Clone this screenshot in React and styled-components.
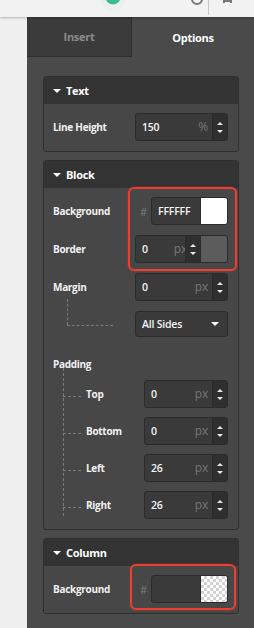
import React from 'react';
import styled, { createGlobalStyle } from 'styled-components';

const Global = createGlobalStyle`
  html, body { margin: 0; padding: 0; }
  body {
    width: 254px;
    height: 628px;
    overflow: hidden;
    background: #efefef;
    font-family: "Open Sans", "Liberation Sans", sans-serif;
  }
`;

const Page = styled.div`
  display: flex;
  flex-direction: column;
  height: 628px;
`;

const TopBar = styled.div`
  height: 17px;
  background: #f2f2f2;
  box-shadow: 0 1px 2px rgba(0, 0, 0, 0.25);
  position: relative;
  z-index: 1;
  overflow: hidden;
  display: flex;
  align-items: flex-start;
`;

const Main = styled.div`
  flex: 1;
  display: flex;
`;

const LeftStrip = styled.div`
  width: 27px;
  background: #efefef;
`;

const Panel = styled.div`
  flex: 1;
  background: #4a4a4a;
  display: flex;
  flex-direction: column;
`;

const Tabs = styled.div`
  display: flex;
  height: 40px;
`;

const Tab = styled.div`
  flex: ${p => (p.$active ? '0 0 122px' : '0 0 104px')};
  display: flex;
  align-items: center;
  justify-content: center;
  font-size: 11px;
  font-weight: 700;
  letter-spacing: -0.3px;
  color: ${p => (p.$active ? '#ffffff' : '#8a8a8a')};
  background: ${p => (p.$active ? '#4a4a4a' : '#3b3b3b')};
  border-bottom: ${p => (p.$active ? 'none' : '1px solid #2e2e2e')};
  border-right: ${p => (p.$active ? 'none' : '1px solid #2e2e2e')};
`;

const Content = styled.div`
  padding: 19px 15px 0 16px;
  display: flex;
  flex-direction: column;
  gap: 8px;
`;

const Card = styled.div`
  border: 1px solid #2f2f2f;
  border-radius: 3px;
  background: #474747;
  overflow: hidden;
`;

const CardHeader = styled.div`
  height: 27px;
  background: #333333;
  display: flex;
  align-items: center;
  padding-left: 9px;
  gap: 5px;
  font-size: 11px;
  font-weight: 700;
  letter-spacing: -0.3px;
  color: #ffffff;
`;

const Caret = styled.span`
  width: 0;
  height: 0;
  border-left: 4px solid transparent;
  border-right: 4px solid transparent;
  border-top: 4px solid #ffffff;
`;

const CardBody = styled.div`
  padding: 9px 10px 10px 9px;
  display: flex;
  flex-direction: column;
  gap: 10px;
`;

const Row = styled.div`
  display: flex;
  align-items: ${p => p.$align || 'center'};
  height: ${p => p.$h || 28}px;
  padding-left: ${p => p.$indent || 0}px;
  position: relative;
`;

const Label = styled.span`
  font-size: 10px;
  font-weight: 700;
  letter-spacing: -0.3px;
  color: #f2f2f2;
`;

const Controls = styled.div`
  margin-left: auto;
  display: flex;
  align-items: center;
`;

const Box = styled.div`
  width: ${p => p.$w}px;
  height: ${p => p.$h || 28}px;
  box-sizing: border-box;
  background: #3a3a3a;
  border: 1px solid #2b2b2b;
  border-radius: 3px;
  display: flex;
  align-items: stretch;
  overflow: hidden;
`;

const Value = styled.div`
  flex: 1;
  min-width: 0;
  display: flex;
  align-items: center;
  padding-left: 6px;
  font-size: 10.5px;
  font-weight: 600;
  letter-spacing: -0.2px;
  color: #f4f4f4;
  overflow: hidden;
  white-space: nowrap;
`;

const Unit = styled.span`
  margin-left: auto;
  padding-right: 4px;
  margin-top: -2px;
  font-size: 12px;
  font-weight: 400;
  color: #767676;
  ${p => p.$clip && 'margin-right: -6px;'}
`;

const Spinner = styled.div`
  width: 14px;
  background: #2f2f2f;
  border-left: 1px solid #2a2a2a;
  display: flex;
  flex-direction: column;
  align-items: center;
  justify-content: center;
  gap: 5px;
`;

const Tri = styled.span`
  width: 0;
  height: 0;
  border-left: 3px solid transparent;
  border-right: 3px solid transparent;
  ${p => (p.$down ? 'border-top: 3px solid #e8e8e8;' : 'border-bottom: 3px solid #e8e8e8;')}
`;

const Swatch = styled.div`
  width: 26px;
  border-left: 1px solid #2b2b2b;
  background: ${p => p.$color};
  ${p =>
    p.$checker &&
    `background-color: #ffffff;
     background-image: linear-gradient(45deg, #d2d2d2 25%, transparent 25%, transparent 75%, #d2d2d2 75%),
       linear-gradient(45deg, #d2d2d2 25%, transparent 25%, transparent 75%, #d2d2d2 75%);
     background-size: 6px 6px;
     background-position: 0 0, 3px 3px;`}
`;

const Hash = styled.span`
  font-size: 11px;
  color: #7e7e7e;
  margin-right: 4px;
`;

const Highlight = styled.div`
  position: relative;
  display: flex;
  flex-direction: column;
  gap: 10px;
  &::after {
    content: '';
    position: absolute;
    top: ${p => p.$top}px;
    bottom: ${p => p.$bottom}px;
    left: ${p => p.$left}px;
    right: ${p => p.$right}px;
    border: 2px solid #ee3d32;
    border-radius: 6px;
    box-shadow: 0 0 2px rgba(238, 61, 50, 0.6);
    pointer-events: none;
  }
`;

const Select = styled.div`
  width: 93px;
  height: 26px;
  box-sizing: border-box;
  background: #3a3a3a;
  border: 1px solid #2b2b2b;
  border-radius: 3px;
  display: flex;
  align-items: center;
  padding: 0 8px 0 6px;
  font-size: 10.5px;
  font-weight: 600;
  letter-spacing: -0.2px;
  color: #f4f4f4;
`;

const SelectCaret = styled(Caret)`
  margin-left: auto;
`;

const Dashed = styled.div`
  position: absolute;
  border-left: ${p => (p.$v ? '1px dashed #7a7a7a' : 'none')};
  border-top: ${p => (p.$v ? 'none' : '1px dashed #7a7a7a')};
  left: ${p => p.$x}px;
  top: ${p => p.$y}px;
  width: ${p => (p.$v ? 0 : p.$len)}px;
  height: ${p => (p.$v ? p.$len : 0)}px;
`;

const SubGroup = styled.div`
  position: relative;
  display: flex;
  flex-direction: column;
  gap: ${p => p.$gap || 9}px;
`;

function NumberInput({ value, unit, width }) {
  return (
    <Box $w={width}>
      <Value>
        {value}
        <Unit>{unit}</Unit>
      </Value>
      <Spinner>
        <Tri />
        <Tri $down />
      </Spinner>
    </Box>
  );
}

function ColorInput({ value, color, checker }) {
  return (
    <Controls>
      <Hash>#</Hash>
      <Box $w={77}>
        <Value>{value}</Value>
        <Swatch $color={color} $checker={checker} />
      </Box>
    </Controls>
  );
}

export default function App() {
  return (
    <Page>
      <Global />
      <TopBar>
        <svg width="254" height="17" viewBox="0 0 254 17">
          <circle cx="113" cy="-2" r="13" fill="#ebefed" />
          <circle cx="113" cy="-3" r="7.5" fill="#3dbc92" />
          <path d="M192 -1 a5 5 0 0 0 10 0" fill="none" stroke="#777" strokeWidth="2" />
          <line x1="208.5" y1="0" x2="208.5" y2="15" stroke="#c8c8c8" />
          <path d="M223 1 h9 M224 1 v2 M231 1 v2" stroke="#777" strokeWidth="2" />
        </svg>
      </TopBar>
      <Main>
        <LeftStrip />
        <Panel>
          <Tabs>
            <Tab>Insert</Tab>
            <Tab $active>Options</Tab>
          </Tabs>
          <Content>
            <Card>
              <CardHeader>
                <Caret />
                Text
              </CardHeader>
              <CardBody>
                <Row>
                  <Label>Line Height</Label>
                  <Controls>
                    <NumberInput value="150" unit="%" width={93} />
                  </Controls>
                </Row>
              </CardBody>
            </Card>

            <Card>
              <CardHeader>
                <Caret />
                Block
              </CardHeader>
              <CardBody>
                <Highlight $top={-10} $bottom={-8} $left={75} $right={-9}>
                  <Row>
                    <Label>Background</Label>
                    <ColorInput value="FFFFFF" color="#ffffff" />
                  </Row>
                  <Row>
                    <Label>Border</Label>
                    <Controls>
                      <Box $w={93}>
                        <Value>
                          0<Unit $clip>px</Unit>
                        </Value>
                        <Spinner>
                          <Tri />
                          <Tri $down />
                        </Spinner>
                        <Swatch $color="#5c5c5c" />
                      </Box>
                    </Controls>
                  </Row>
                </Highlight>
                <SubGroup $gap={10}>
                  <Row>
                    <Label>Margin</Label>
                    <Controls>
                      <NumberInput value="0" unit="px" width={93} />
                    </Controls>
                  </Row>
                  <Row $h={26}>
                    <Dashed $v $x={14} $y={-12} $len={26} />
                    <Dashed $x={14} $y={14} $len={46} />
                    <Controls>
                      <Select>
                        All Sides
                        <SelectCaret />
                      </Select>
                    </Controls>
                  </Row>
                </SubGroup>
                <SubGroup>
                  <Row $h={24} $align="flex-end">
                    <Label>Padding</Label>
                  </Row>
                  <Dashed $v $x={10} $y={21} $len={148} />
                  {[
                    ['Top', '0'],
                    ['Bottom', '0'],
                    ['Left', '26'],
                    ['Right', '26'],
                  ].map(([name, v]) => (
                    <Row key={name} $indent={33}>
                      <Dashed $x={10} $y={16} $len={18} />
                      <Label>{name}</Label>
                      <Controls>
                        <NumberInput value={v} unit="px" width={84} />
                      </Controls>
                    </Row>
                  ))}
                </SubGroup>
              </CardBody>
            </Card>

            <Card>
              <CardHeader>
                <Caret />
                Column
              </CardHeader>
              <CardBody>
                <Highlight $top={-11} $bottom={-7} $left={77} $right={-8}>
                  <Row>
                    <Label>Background</Label>
                    <ColorInput value="" checker />
                  </Row>
                </Highlight>
              </CardBody>
            </Card>
          </Content>
        </Panel>
      </Main>
    </Page>
  );
}
